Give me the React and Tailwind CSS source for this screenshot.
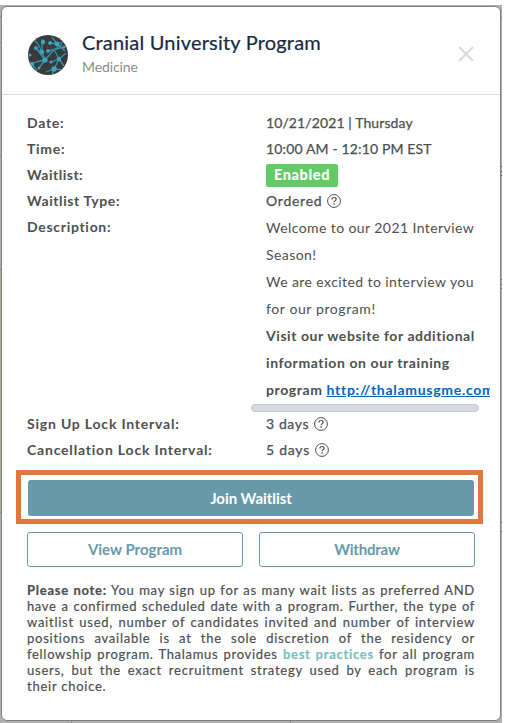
import React from "react";

const LINKS = [
  [4, 3, 10, 9], [10, 9, 14, 17], [14, 17, 17, 25], [17, 25, 8, 27], [8, 27, 1, 30],
  [14, 4, 14, 17], [22, 8, 29, 9], [29, 9, 38, 6], [29, 9, 24, 2], [29, 9, 37, 16],
  [20, 16, 36, 12], [17, 25, 25, 16], [25, 16, 34, 9], [31, 24, 23, 27], [31, 24, 38, 18],
  [31, 24, 36, 31], [26, 34, 18, 37], [26, 34, 36, 35], [26, 34, 31, 24], [4, 29, 9, 36],
  [6, 13, 14, 17], [26, 34, 24, 40], [17, 25, 11, 33], [31, 24, 27, 16], [8, 13, 17, 25],
];
const NODES = [
  [14, 17, 2.2], [17, 25, 2.6], [29, 9, 2.4], [31, 24, 2.3], [26, 34, 2.7], [4, 29, 2.2], [8, 13, 1.9],
  [20, 16, 1.9], [22, 8, 1.9], [15, 7, 2.2], [23, 27, 1.6], [2, 20, 1.6], [11, 33, 1.5], [36, 12, 1.5],
];

function Logo() {
  return (
    <svg width="40" height="40" viewBox="0 0 40 40" className="shrink-0 rounded-full bg-[#383a3c]">
      {LINKS.map(([a, b, c, d], i) => <line key={i} x1={a} y1={b} x2={c} y2={d} stroke="#3793aa" strokeWidth="1.3" />)}
      {NODES.map(([x, y, r], i) => <circle key={i} cx={x} cy={y} r={r} fill="#3fa4bd" />)}
    </svg>
  );
}

function Help() {
  return (
    <svg width="14" height="14" viewBox="0 0 14 14" fill="none" stroke="#4d4f50" className="ml-[5px] shrink-0">
      <circle cx="7" cy="7" r="6.4" strokeWidth="1" />
      <path d="M5 5.5C5 4.2 5.9 3.5 7.1 3.5S9.1 4.2 9.1 5.3C9.1 6.6 7.1 6.7 7.1 8.3" strokeWidth="1.2" />
      <path d="M7.1 9.3V10.7" strokeWidth="1.3" />
    </svg>
  );
}

function Row({ label, ls, children }) {
  return (
    <div className="flex h-[26px] items-start">
      <div className={"w-[239px] shrink-0 font-bold leading-[26px] " + ls}>{label}</div>
      <div className="flex h-[26px] items-center whitespace-nowrap leading-[26px]">{children}</div>
    </div>
  );
}

// Slightly heavier than regular, lighter than bold.
const MEDIUM = "[-webkit-text-stroke:0.25px_#4d4f50] ";

// Heights and colours of the page slivers visible on both sides of the dialog.
const LEFT = [
  ["h-[11px]", "bg-[#b0b0b0]"], ["h-px", "bg-[#8c8c8c]"], ["h-[25px]", "bg-[#b0b0b0]"], ["h-px", "bg-[#8c8c8c]"],
  ["h-[113px]", "bg-[#b0b0b0]"], ["h-px", "bg-[#8c8c8c]"], ["h-[112px]", "bg-[#b0b0b0]"], ["h-px", "bg-[#8c8c8c]"],
  ["h-[242px]", "bg-[#b3b09c]"], ["h-px", "bg-[#8c8c8c]"], ["h-[210px]", "bg-[#b0b0b0]"],
];
const RIGHT = [
  ["h-[11px]", "bg-[#b0b0b0]"], ["h-px", "bg-[#8c8c8c]"], ["h-[149px]", "bg-[#b0b0b0]"], ["h-px", "bg-[#555555]"],
  ["h-[4px]", "bg-[#b0b0b0]"], ["h-px", "bg-[#555555]"], ["h-[3px]", "bg-[#b0b0b0]"], ["h-px", "bg-[#555555]"],
  ["h-[103px]", "bg-[#b0b0b0]"], ["h-px", "bg-[#3f8274]"], ["h-[4px]", "bg-[#b0b0b0]"], ["h-px", "bg-[#3f8274]"],
  ["h-[3px]", "bg-[#b0b0b0]"], ["h-px", "bg-[#3f8274]"], ["h-[233px]", "bg-[#b0b0b0]"], ["h-px", "bg-[#3f8274]"],
  ["h-[8px]", "bg-[#b0b0b0]"], ["h-px", "bg-[#3f8274]"], ["h-[191px]", "bg-[#b0b0b0]"],
];

function Sliver({ parts }) {
  return (
    <div className="flex w-px shrink-0 flex-col">
      {parts.map(([h, c], i) => <div key={i} className={"w-px shrink-0 " + h + " " + c} />)}
    </div>
  );
}

export default function App() {
  return (
    <div className="h-[723px] w-[505px] overflow-hidden bg-white pt-[5px] font-['Lato',sans-serif] text-[#4d4f50]">
      <div className="flex h-[718px] w-[502px] bg-[#b0b0b0]">
        <Sliver parts={LEFT} />
        <div className="w-[500px] shrink-0 pt-px">
          <div className="flex h-[715px] w-[500px] flex-col rounded-[6px] border border-[#808080] bg-white">
            <header className="flex h-[88px] shrink-0 items-start border-b border-[#d9d9e0] pl-[26px] pr-[26px]">
              <div className="mt-[28px]"><Logo /></div>
              <div className="ml-[14px] mt-[22px] whitespace-nowrap">
                <h1 className="text-[20px] leading-[26px] tracking-[0.2px] text-[#17293f] [-webkit-text-stroke:0.2px_#17293f]">Cranial University Program</h1>
                <p className="mt-[3px] text-[14px] leading-[18px] tracking-[-0.1px] text-[#8b8d8f]">Medicine</p>
              </div>
              <svg width="16" height="16" viewBox="0 0 16 16" className="ml-auto mt-[39px]" stroke="#d8dadb" strokeWidth="2"><path d="M1 1L15 15M15 1L1 15" /></svg>
            </header>
            <main className="pl-[25px] pt-[15px] text-[14px]">
              <Row label="Date:" ls="tracking-[0.7px]"><span className={MEDIUM + "tracking-[0.1px]"}>10/21/2021 | Thursday</span></Row>
              <Row label="Time:" ls="tracking-[0.7px]"><span className={MEDIUM + "tracking-[0.14px]"}>10:00 AM - 12:10 PM EST</span></Row>
              <Row label="Waitlist:" ls="tracking-[0.5px]">
                <span className="flex h-[23px] w-[72px] items-center justify-center rounded-[2px] bg-[#62cb67] text-[14.5px] font-black tracking-[0.6px] text-white">Enabled</span>
              </Row>
              <Row label="Waitlist Type:" ls="tracking-[0.6px]"><span className={MEDIUM + "tracking-[0.75px]"}>Ordered</span><Help /></Row>
              <div className="flex">
                <div className="w-[239px] shrink-0 font-bold leading-[26px] tracking-[0.7px]">Description:</div>
                <div className="w-[224px] overflow-hidden whitespace-nowrap text-[14px] leading-[27px] tracking-[0.6px]">
                  <div className="tracking-[0.42px]">
                    <p>Welcome to our 2021 Interview</p><p>Season!</p>
                    <p>We are excited to interview you</p><p className="tracking-[0.6px]">for our program!</p>
                  </div>
                  <p className="font-bold tracking-[0.56px]">Visit our website for additional</p>
                  <p className="font-bold">information on our training</p>
                  <p className="font-bold">program <span className="tracking-[0.72px] text-[#0563c1] underline">http://thalamusgme.com</span></p>
                </div>
              </div>
              <div className="ml-[224px] mt-px h-[8px] w-[228px] rounded-full border border-[#c7cacf] bg-[#d6d9de]" />
              <div className="-mt-px">
                <Row label="Sign Up Lock Interval:" ls="tracking-[0.8px]"><span className={MEDIUM + "tracking-[0.6px]"}>3 days</span><Help /></Row>
                <Row label="Cancellation Lock Interval:" ls="tracking-[0.8px]"><span className={MEDIUM + "tracking-[0.75px]"}>5 days</span><Help /></Row>
              </div>
            </main>
            <div className="ml-[14px] mt-[7px] h-[54px] w-[467px] shrink-0 border-[5px] border-[#e27739] pl-[7px] pt-[5px]">
              <button className="h-[36px] w-[446px] rounded-[3px] bg-[#6899a8] text-[15px] font-bold tracking-[-0.05px] text-white">Join Waitlist</button>
            </div>
            <div className="ml-[25px] mt-[8px] flex gap-[16px] text-[15px] font-bold text-[#6899a8]">
              <button className="h-[35px] w-[216px] rounded-[3px] border border-[#6899a8] pb-px">View Program</button>
              <button className="h-[35px] w-[216px] rounded-[3px] border border-[#6899a8] pb-px tracking-[-0.2px]">Withdraw</button>
            </div>
            <div className="ml-[25px] mt-[15px] w-[448px] whitespace-nowrap text-[13px] leading-[16px] tracking-[0.75px] [-webkit-text-stroke:0.2px]">
              <div className="[text-align-last:justify]">
                <p><b>Please note:</b> You may sign up for as many wait lists as preferred AND</p>
                <p className="tracking-[0.62px]">have a confirmed scheduled date with a program. Further, the type of</p>
                <p>waitlist used, number of candidates invited and number of interview</p>
                <p>positions available is at the sole discretion of the residency or</p>
                <p className="tracking-[0.7px]">fellowship program. Thalamus provides <b className="text-[#7dbfc0]">best practices</b> for all program</p>
                <p>users, but the exact recruitment strategy used by each program is</p>
              </div>
              <p>their choice.</p>
            </div>
          </div>
          <div className="flex h-[2px]">
            <div className="ml-[70px] h-[2px] w-px bg-[#8c8c8c]" />
            <div className="ml-[218px] h-[2px] w-px bg-[#8c8c8c]" />
          </div>
        </div>
        <Sliver parts={RIGHT} />
      </div>
    </div>
  );
}
